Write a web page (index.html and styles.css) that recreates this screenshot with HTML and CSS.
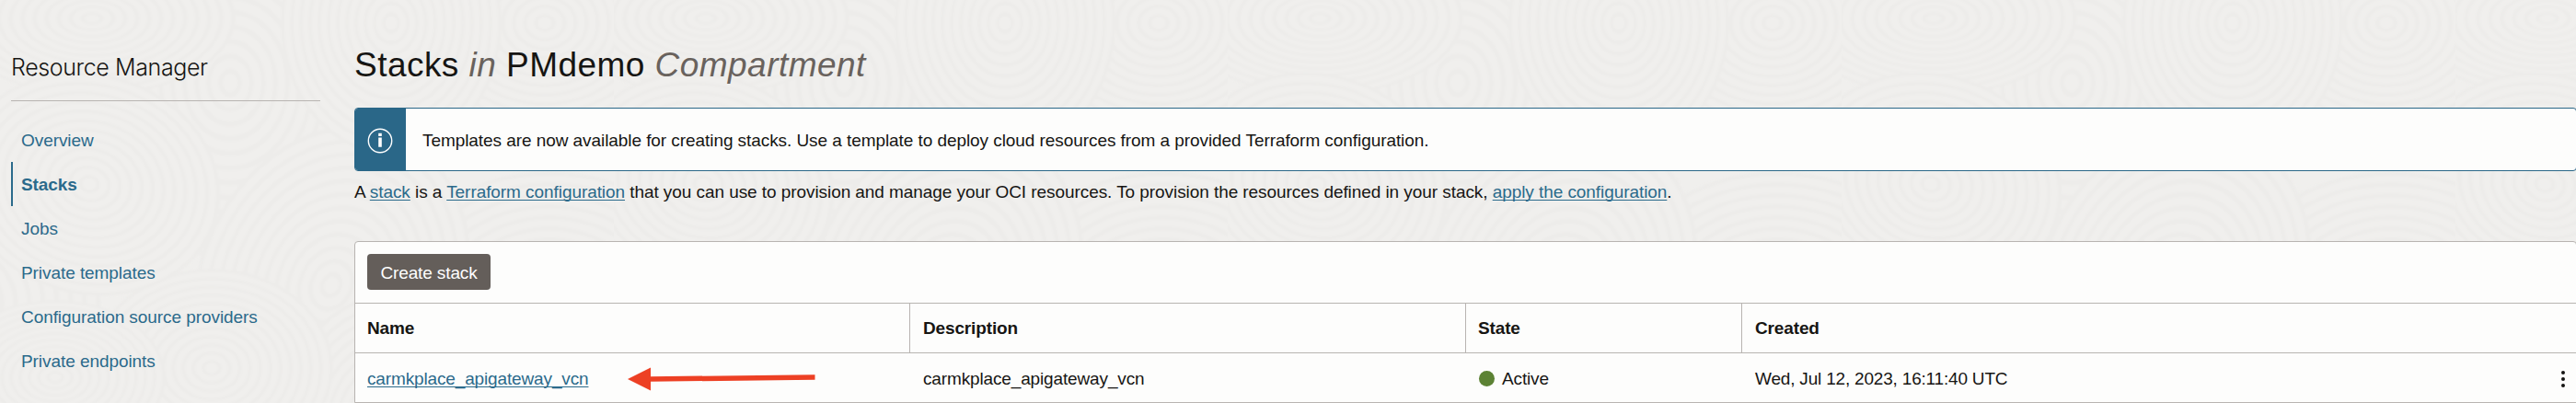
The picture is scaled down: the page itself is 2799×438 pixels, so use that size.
FILE: index.html
```
<!DOCTYPE html>
<html lang="en">
<head>
<meta charset="utf-8">
<title>Stacks</title>
<link rel="stylesheet" href="styles.css">
</head>
<body>
<svg class="backdrop" width="2799" height="438" aria-hidden="true">
  <defs>
    <g id="ripple">
      <circle r="118" class="ripple-fill"/>
      <g class="ripple-rings"><circle r="8"/><circle r="18"/><circle r="28"/><circle r="38"/><circle r="48"/><circle r="58"/><circle r="68"/><circle r="78"/><circle r="88"/><circle r="98"/><circle r="108"/><circle r="118"/></g>
    </g>
    <pattern id="waves" width="667" height="438" patternUnits="userSpaceOnUse">
      <g class="soft">
      <use href="#ripple" transform="translate(-70 330) scale(1.5 1.2)"/><use href="#ripple" transform="translate(597 330) scale(1.5 1.2)"/>
      <use href="#ripple" transform="translate(250 90) scale(1.3 1.6)"/><use href="#ripple" transform="translate(360 310) rotate(25) scale(1.2 1.5)"/>
      <use href="#ripple" transform="translate(592 25) scale(1.2 1)"/><use href="#ripple" transform="translate(425 25) scale(1 1.2)"/>
      <use href="#ripple" transform="translate(425 463) scale(1 1.2)"/><use href="#ripple" transform="translate(100 20) scale(1.3 .7)"/>
      <use href="#ripple" transform="translate(230 400) scale(1.1 .9)"/><use href="#ripple" transform="translate(97 200) rotate(15) scale(1.2 1)"/>
      <use href="#ripple" transform="translate(60 410) scale(1 .7)"/>
      </g>
    </pattern>
  </defs>
  <rect width="2799" height="438" fill="url(#waves)"/>
</svg>
<div class="page">
  <aside class="sidebar">
    <h2 class="service">Resource Manager</h2>
    <nav class="nav">
      <a class="nav-item">Overview</a>
      <a class="nav-item selected">Stacks</a>
      <a class="nav-item">Jobs</a>
      <a class="nav-item">Private templates</a>
      <a class="nav-item">Configuration source providers</a>
      <a class="nav-item">Private endpoints</a>
    </nav>
  </aside>
  <main class="main">
    <h1 class="title">Stacks <em>in</em> PMdemo <em>Compartment</em></h1>
    <div class="banner">
      <div class="banner-icon">
        <svg width="28" height="28" viewBox="0 0 28 28"><circle cx="14" cy="14" r="12.7" fill="none" stroke="#fff" stroke-width="1.4"/><path d="M12.2 5.7h3.6v3.2h-3.6zM12.2 10.5h3.6v10.2h-3.6z" fill="#fff"/></svg>
      </div>
      <p class="banner-text">Templates are now available for creating stacks. Use a template to deploy cloud resources from a provided Terraform configuration.</p>
    </div>
    <p class="intro">A <a class="link">stack</a> is a <a class="link">Terraform configuration</a> that you can use to provision and manage your OCI resources. To provision the resources defined in your stack, <a class="link">apply the configuration</a>.</p>
    <section class="panel">
      <div class="toolbar"><button class="create">Create stack</button></div>
      <div class="row head">
        <div class="cell">Name</div><div class="cell">Description</div><div class="cell">State</div><div class="cell">Created</div>
      </div>
      <div class="row">
        <div class="cell"><a class="link">carmkplace_apigateway_vcn</a>
          <svg class="arrow" width="204" height="26" viewBox="0 0 204 26"><path d="M0 13 25 .5V25.500z" fill="#ed4024"/><path d="M24 13 203.500 11" stroke="#ed4024" stroke-width="5.500"/></svg>
        </div>
        <div class="cell">carmkplace_apigateway_vcn</div>
        <div class="cell state"><i class="dot"></i>Active</div>
        <div class="cell created"><span>Wed, Jul 12, 2023, 16:11:40 UTC</span>
          <svg class="kebab" width="4" height="18" viewBox="0 0 4 18"><circle cx="2" cy="2" r="2"/><circle cx="2" cy="9" r="2"/><circle cx="2" cy="16" r="2"/></svg>
        </div>
      </div>
    </section>
  </main>
</div>
</body>
</html>
```
FILE: styles.css
```
* { box-sizing: border-box; }
body { margin: 0; width: 2799px; height: 438px; overflow: hidden; position: relative; background: #f0efed; color: #161513; font: 19px/24px "Liberation Sans", Arial, sans-serif; letter-spacing: -0.067px; }
h1, h2, p { margin: 0; font-weight: 400; }
.backdrop { position: absolute; left: 0; top: 0; }
.ripple-fill { fill: #f0efed; }
.ripple-rings { fill: none; stroke: #edecea; stroke-width: 3.5; }
.soft { filter: blur(0.8px); }
.page { position: relative; display: flex; height: 438px; }
.sidebar { width: 336px; margin-left: 12px; }
.service { height: 110px; padding-top: 57px; border-bottom: 1px solid #b8b4b1; font: 300 25px/32px Inter, "Liberation Sans", sans-serif; letter-spacing: -0.38px; }
.nav { display: flex; flex-direction: column; padding-top: 18px; }
.nav-item { height: 48px; padding-left: 11px; line-height: 50px; color: #2b6a8b; white-space: nowrap; }
.selected { border-left: 2px solid #2b6a8b; padding-left: 9px; font-weight: 700; }
.main { flex: 1; margin-left: 37px; margin-right: -1px; min-width: 0; }
.title { padding-top: 49px; height: 117px; font-size: 37px; line-height: 44px; letter-spacing: 0.46px; }
.title em { color: #69625d; }
.banner { display: flex; height: 69px; border: 1px solid #2a6788; border-radius: 4px; background: #fdfdfc; overflow: hidden; }
.banner-icon { display: flex; align-items: center; justify-content: center; width: 55px; background: #2a6788; padding: 2px 1px 0 0; }
.banner-text { padding-left: 18px; line-height: 70px; }
.intro { height: 76px; padding-top: 11px; }
.link { color: #2b6a8b; text-decoration: underline; text-decoration-thickness: 1px; text-underline-offset: 2px; text-decoration-skip-ink: none; }
.panel { height: 176px; border: 1px solid #b8b4b1; border-radius: 4px 4px 0 0; background: #fdfdfc; overflow: hidden; }
.toolbar { height: 66px; padding: 13px; }
.create { display: block; width: 134px; height: 39px; padding: 2px 0 0; border: 0; border-radius: 4px; background: #645e5a; color: #fff; font: inherit; letter-spacing: -0.12px; }
.row { display: grid; grid-template-columns: 602px 604px 300px 1fr; height: 54px; border-top: 1px solid #b8b4b1; letter-spacing: -0.14px; }
.cell { display: flex; align-items: center; padding: 2px 0 0 14px; border-left: 1px solid transparent; }
.cell:first-child { padding-left: 12px; }
.cell:nth-child(3) { padding-left: 13px; }
.head { font-weight: 700; }
.head .cell { padding-top: 0; }
.head .cell + .cell { border-left-color: #b8b4b1; }
.arrow { margin-left: 43px; }
.state { gap: 8px; }
.dot { width: 17px; height: 17px; margin-left: 1px; border-radius: 50%; background: #5c8234; }
.created { justify-content: space-between; padding-right: 12px; letter-spacing: -0.19px; }
.kebab { fill: #161513; }
```
